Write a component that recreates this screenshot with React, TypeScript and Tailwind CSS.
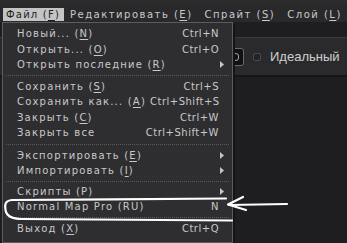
import React from "react";

const F = { fontFamily: '"DejaVu Sans", sans-serif' };

function M({ pre, m, post }: { pre: string; m: string; post: string }) {
  return (
    <>
      {pre}
      <span className="underline underline-offset-[2px] decoration-1">{m}</span>
      {post}
    </>
  );
}

type Item = { label: React.ReactNode; sc?: string; arrow?: boolean };

function Row({ label, sc, arrow }: Item) {
  return (
    <div className="flex h-[15.5px] items-center pl-[14px] pr-[8px]">
      <div className="flex-1 whitespace-nowrap">{label}</div>
      <div className="ml-[4px] whitespace-nowrap tracking-[0.5px]">{sc}</div>
      <div className="flex w-[5px] shrink-0 justify-end">
        {arrow && (
          <svg width="4" height="7" viewBox="0 0 4 7">
            <path d="M0 0 L4 3.5 L0 7 Z" fill="#c4c4c4" />
          </svg>
        )}
      </div>
    </div>
  );
}

function Sep({ h = 6 }: { h?: number }) {
  return (
    <div className="flex items-center px-[3px]" style={{ height: h }}>
      <div className="w-full border-t border-dotted border-[#5a5a5e]" />
    </div>
  );
}

function MenuTop({ children, active }: { children: React.ReactNode; active?: boolean }) {
  return (
    <div
      className={
        active
          ? "flex h-[13px] shrink-0 items-center whitespace-nowrap bg-[#c4c4c4] pl-[3px] pr-[4px] text-[#1c1c1c]"
          : "flex h-[13px] shrink-0 items-center whitespace-nowrap px-[6px] tracking-[1.5px]"
      }
    >
      {children}
    </div>
  );
}

export default function App() {
  return (
    <div
      className="relative h-[243px] w-[347px] overflow-hidden bg-[#1e1e21] text-[10px] tracking-[1.2px] text-[#c9c9c9]"
      style={F}
    >
      {/* title strip */}
      <div className="h-[5px] bg-[#2c2c2c]" />
      {/* menu bar */}
      <div className="flex h-[17px] items-end overflow-hidden bg-[#29292c] pb-[1px] pl-[3px]">
        <MenuTop active>
          <M pre="Файл (" m="F" post=")" />
        </MenuTop>
        <MenuTop>
          <M pre="Редактировать (" m="E" post=")" />
        </MenuTop>
        <MenuTop>
          <M pre="Спрайт (" m="S" post=")" />
        </MenuTop>
        <MenuTop>
          <M pre="Слой (" m="L" post=")" />
        </MenuTop>
        <MenuTop>К</MenuTop>
      </div>
      {/* toolbar area */}
      <div className="mt-[15px] flex h-[38px] items-center border-t border-[#3a3a3e] bg-[#2a2a2d] pl-[228px]">
        <div className="flex h-[18px] w-[16px] shrink-0 items-center justify-center rounded-[3px] border border-[#6a6a6a] bg-[#111]">
          <div className="h-[8px] w-[6px] rounded-full border border-[#aaa]" />
        </div>
        <div className="ml-[9px] h-[8px] w-[8px] shrink-0 rounded-[2px] border border-[#4a4a4e] bg-[#232326]" />
        <div
          className="ml-[9px] whitespace-nowrap text-[13px] tracking-normal text-[#cfcfcf]"
          style={{ fontFamily: '"Liberation Sans", sans-serif' }}
        >
          Идеальный
        </div>
      </div>
      <div className="h-[2px] bg-[#151517]" />

      {/* dropdown */}
      <div className="absolute left-[2px] top-[22px] w-[231px] border border-[#5c5c60] bg-[#2e2e31] pt-[3px] pb-[6px] shadow-[2px_2px_0_#141416]">
        <Row label={<M pre="Новый... (" m="N" post=")" />} sc="Ctrl+N" />
        <Row label={<M pre="Открыть... (" m="O" post=")" />} sc="Ctrl+O" />
        <Row label={<M pre="Открыть последние (" m="R" post=")" />} arrow />
        <Sep h={6} />
        <Row label={<M pre="Сохранить (" m="S" post=")" />} sc="Ctrl+S" />
        <Row label={<M pre="Сохранить как... (" m="A" post=")" />} sc="Ctrl+Shift+S" />
        <Row label={<M pre="Закрыть (" m="C" post=")" />} sc="Ctrl+W" />
        <Row label="Закрыть все" sc="Ctrl+Shift+W" />
        <Sep h={7} />
        <Row label={<M pre="Экспортировать (" m="E" post=")" />} arrow />
        <Row label={<M pre="Импортировать (" m="I" post=")" />} arrow />
        <Sep h={5} />
        <Row label="Скрипты (P)" arrow />
        <Row label="Normal Map Pro (RU)" sc="N" />
        <Sep h={6} />
        <Row label={<M pre="Выход (" m="X" post=")" />} sc="Ctrl+Q" />
      </div>

      {/* hand-drawn annotation */}
      <svg className="pointer-events-none absolute left-0 top-0" width="347" height="243" viewBox="0 0 347 243">
        <path
          d="M226 198.5 C160 199 80 199.5 12 200 C5 200.5 4.5 205 5.5 210 C6.5 216 11 219 22 219 L232 220.5"
          fill="none"
          stroke="#fff"
          strokeWidth="2.2"
          strokeLinecap="round"
        />
        <path d="M287 204 L229 205" fill="none" stroke="#fff" strokeWidth="2.2" strokeLinecap="round" />
        <path d="M243 197 L228 204.5 L246 210" fill="none" stroke="#fff" strokeWidth="2.2" strokeLinecap="round" strokeLinejoin="round" />
      </svg>
    </div>
  );
}
